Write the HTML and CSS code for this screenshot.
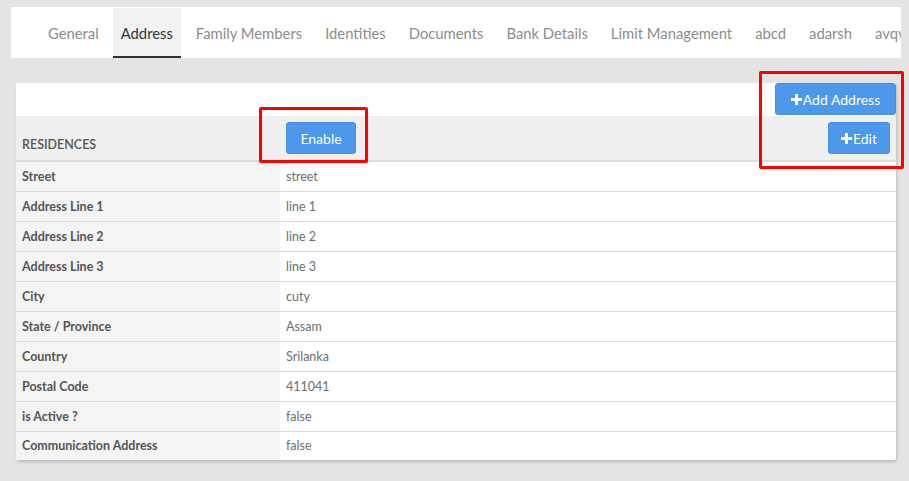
FILE: index.html
```html
<!DOCTYPE html>
<html>
<head>
<meta charset="utf-8">
<link rel="stylesheet" href="styles.css">
</head>
<body>
<div class="page">
  <nav class="tabs">
    <a class="tab">General</a>
    <a class="tab active">Address</a>
    <a class="tab">Family Members</a>
    <a class="tab">Identities</a>
    <a class="tab">Documents</a>
    <a class="tab">Bank Details</a>
    <a class="tab">Limit Management</a>
    <a class="tab">abcd</a>
    <a class="tab">adarsh</a>
    <a class="tab">avqv</a>
  </nav>

  <section class="card">
    <div class="card-head">
      <button class="btn btn-add"><svg class="plus" viewBox="0 0 11 11"><rect x="4" y="0" width="3" height="11"/><rect x="0" y="4" width="11" height="3"/></svg>Add Address</button>
    </div>
    <table class="grid">
      <thead>
        <tr>
          <th class="head-label">RESIDENCES</th>
          <th class="head-actions">
            <div class="actions">
              <button class="btn btn-enable">Enable</button>
              <button class="btn btn-edit"><svg class="plus" viewBox="0 0 11 11"><rect x="4" y="0" width="3" height="11"/><rect x="0" y="4" width="11" height="3"/></svg>Edit</button>
            </div>
          </th>
        </tr>
      </thead>
      <tbody>
        <tr><td class="lbl">Street</td><td class="val">street</td></tr>
        <tr><td class="lbl">Address Line 1</td><td class="val">line 1</td></tr>
        <tr><td class="lbl">Address Line 2</td><td class="val">line 2</td></tr>
        <tr><td class="lbl">Address Line 3</td><td class="val">line 3</td></tr>
        <tr><td class="lbl">City</td><td class="val">cuty</td></tr>
        <tr><td class="lbl">State / Province</td><td class="val">Assam</td></tr>
        <tr><td class="lbl">Country</td><td class="val">Srilanka</td></tr>
        <tr><td class="lbl">Postal Code</td><td class="val">411041</td></tr>
        <tr><td class="lbl">is Active ?</td><td class="val">false</td></tr>
        <tr><td class="lbl">Communication Address</td><td class="val">false</td></tr>
      </tbody>
    </table>
  </section>

  <div class="mark mark-enable"></div>
  <div class="mark mark-right"></div>
</div>
</body>
</html>
```

FILE: styles.css
```css
* { box-sizing: border-box; }
html, body {
  margin: 0;
  padding: 0;
  background: #e4e4e4;
  font-family: "Lato", "Open Sans", sans-serif;
}
.page {
  position: relative;
  width: 909px;
  height: 481px;
  padding-top: 7px;
  overflow: hidden;
}
.tabs {
  display: flex;
  margin-left: 11px;
  width: 890px;
  height: 51px;
  background: #fff;
  padding-left: 29px;
  gap: 7px;
  overflow: hidden;
  white-space: nowrap;
}
.tab {
  display: flex;
  align-items: center;
  padding: 0 8px 1px;
  margin-top: 1px;
  font-size: 14.8px;
  color: #8c8c8c;
  flex: none;
}
.tab:first-child { margin-right: -1px; }
.tab.active {
  background: #f2f2f2;
  color: #333;
  border-bottom: 2px solid #333;
  padding-top: 2px;
}
.card {
  margin: 25px 0 0 16px;
  width: 880px;
  background: #fff;
  border-radius: 2px;
  box-shadow: 1px 2px 3px rgba(0,0,0,0.18);
}
.card-head {
  height: 33px;
  display: flex;
  justify-content: flex-end;
}
.btn {
  font-family: inherit;
  background: #4d98ea;
  color: #fff;
  border: 1px solid #4390e4;
  border-radius: 3px;
  height: 32px;
  font-size: 14px;
  display: inline-flex;
  align-items: center;
  justify-content: center;
  padding: 0;
  cursor: pointer;
}
.plus {
  width: 11px;
  height: 11px;
  fill: #fff;
  margin-right: 1px;
}
.btn-add { width: 121px; }
.btn-enable { width: 70px; }
.btn-edit { width: 62px; }
.grid {
  width: 100%;
  border-collapse: collapse;
  font-size: 12.5px;
}
.grid th {
  background: #efefef;
  height: 45px;
  border-bottom: 2px solid #dcdcdc;
  padding: 0;
}
.head-label {
  width: 264px;
  text-align: left;
  vertical-align: bottom;
  padding: 0 6px 8px !important;
  font-weight: 600;
  color: #555;
  font-size: 12.5px;
}
.head-actions {
  vertical-align: top;
}
.actions {
  display: flex;
  justify-content: space-between;
  padding: 6px 6px 0 6px;
}
.grid td {
  height: 30px;
  border-bottom: 1px solid #dcdcdc;
  padding: 0 6px;
  vertical-align: middle;
}
.grid tbody tr:last-child td { border-bottom: none; height: 29px; }
.lbl {
  background: #f4f4f4;
  font-weight: 700;
  color: #555;
}
.val {
  color: #6e6e6e;
}
.mark {
  position: absolute;
  border: 3px solid #f00;
  border-radius: 2px;
}
.mark-enable {
  left: 259px;
  top: 107px;
  width: 109px;
  height: 56px;
}
.mark-right {
  left: 759px;
  top: 71px;
  width: 145px;
  height: 98px;
}
```
